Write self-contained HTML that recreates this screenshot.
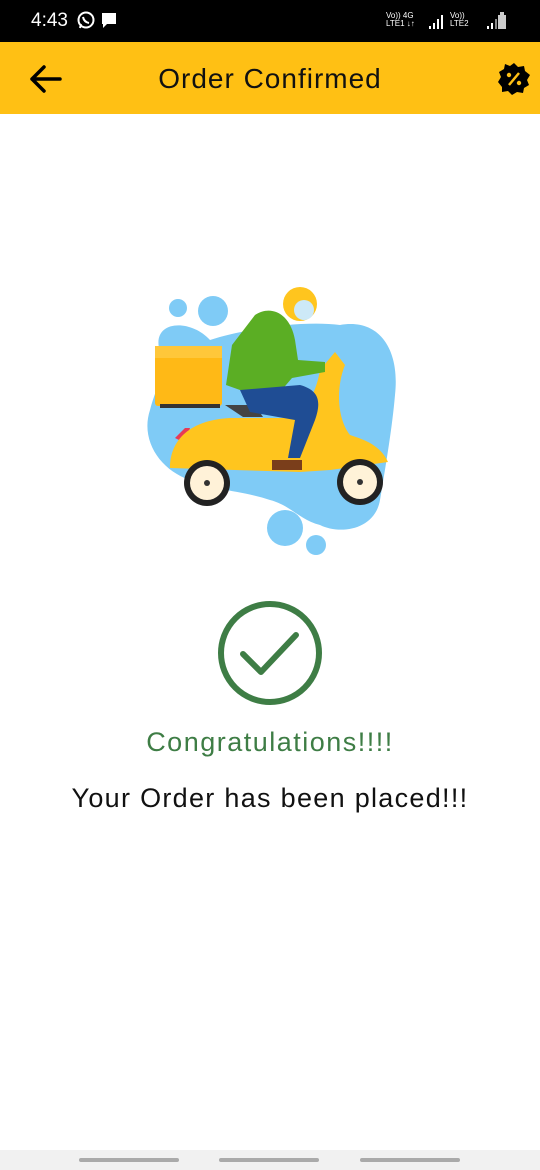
<!DOCTYPE html>
<html><head><meta charset="utf-8"><style>
html,body{margin:0;padding:0;width:540px;height:1170px;background:#fff;overflow:hidden;font-family:"Liberation Sans",sans-serif;position:relative}
.sb{position:absolute;left:0;top:0;width:540px;height:42px;background:#000;color:#fff}
.hd{position:absolute;left:0;top:42px;width:540px;height:72px;background:#FFC014}
.t{position:absolute;width:540px;text-align:center}
.nav{position:absolute;left:0;top:1150px;width:540px;height:20px;background:#f1f1f1}
.nav div{position:absolute;top:8px;height:4px;width:100px;background:#aaa;border-radius:2px}
</style></head><body>
<div class="sb">
<div style="position:absolute;left:31px;top:10px;font-size:19px">4:43</div>
<svg style="position:absolute;left:76px;top:10px" width="44" height="22"><circle cx="10" cy="10" r="7.5" fill="none" stroke="#fff" stroke-width="2"/><path d="M4 18 L5 14" stroke="#fff" stroke-width="2"/><path d="M7 7 q1 5 6 6" stroke="#fff" stroke-width="2" fill="none"/><path d="M26 3 h14 v11 h-9 l-4 4 v-4 h-1z" fill="#fff"/></svg>
<div style="position:absolute;left:386px;top:12px;font-size:8px;line-height:8px">Vo)) 4G<br>LTE1 ↓↑</div>
<svg style="position:absolute;left:428px;top:11px" width="90" height="20"><path d="M2 18v-3M6 18v-6M10 18v-10M14 18v-14" stroke="#fff" stroke-width="2"/><path d="M60 18v-3M64 18v-6M68 18v-10M72 18v-14" stroke="#888" stroke-width="2"/><path d="M60 18v-3M64 18v-6" stroke="#fff" stroke-width="2"/><rect x="70" y="4" width="8" height="14" fill="#ccc"/><rect x="72" y="1" width="4" height="3" fill="#ccc"/></svg>
<div style="position:absolute;left:450px;top:12px;font-size:8px;line-height:8px">Vo))<br>LTE2</div>
</div>
<div class="hd">
<svg style="position:absolute;left:28px;top:22px" width="36" height="30"><path d="M4 15 H32 M16 3 L4 15 L16 27" stroke="#000" stroke-width="3.5" fill="none" stroke-linecap="round" stroke-linejoin="round"/></svg>
<div class="t" style="top:21px;font-size:28px;color:#111;letter-spacing:1px">Order Confirmed</div>
<svg style="position:absolute;left:497px;top:20px" width="34" height="34"><g transform="translate(17,17)"><path d="M0-16 L4-12 10-13 11-8 16-4 13 1 15 6 10 9 9 14 3 13 -2 16 -6 12 -12 13 -12 8 -16 3 -13-2 -15-7 -10-10 -9-15 -4-13z" fill="#000"/><path d="M-5 6 L5-6" stroke="#FFC014" stroke-width="2.5"/><circle cx="-5" cy="-4" r="2.2" fill="#FFC014"/><circle cx="5" cy="4" r="2.2" fill="#FFC014"/></g></svg>
</div>
<svg style="position:absolute;left:0;top:0" width="540" height="1170">
<path d="M160 352 C150 320 190 318 210 340 C240 330 300 320 340 325 C380 318 400 350 395 395 C392 430 385 470 380 500 C375 530 340 535 320 525 C300 520 290 505 270 500 C240 490 210 490 190 480 C160 470 140 440 150 410 C155 390 165 375 160 352Z" fill="#7FCBF6"/>
<circle cx="178" cy="308" r="9" fill="#7FCBF6"/><circle cx="213" cy="311" r="15" fill="#7FCBF6"/>
<circle cx="285" cy="528" r="18" fill="#7FCBF6"/><circle cx="316" cy="545" r="10" fill="#7FCBF6"/>
<rect x="155" y="346" width="67" height="60" rx="3" fill="#FFB916"/><rect x="155" y="346" width="67" height="12" fill="#FFC73A"/>
<rect x="160" y="404" width="60" height="4" fill="#333"/>
<path d="M225 405 h30 l8 12 h-20z" fill="#444"/>
<path d="M175 438 l10-10 h5 l-5 15z" fill="#E83A55"/>
<path d="M170 468 C170 440 190 420 230 418 L280 418 C300 418 315 400 320 370 L335 352 L345 365 C335 390 338 420 350 435 C365 440 380 445 388 462 L330 470 L300 472 Z" fill="#FFC51E"/>
<path d="M232 345 L255 315 C270 305 290 312 295 340 L298 360 L325 362 L325 372 L292 378 L280 392 L240 390 L226 385Z" fill="#5BAE24"/>
<path d="M240 390 L300 385 C318 390 322 400 315 420 L300 458 L288 458 L295 420 L250 412Z" fill="#1F4D94"/>
<path d="M272 460 h30 v10 h-30z" fill="#7A3E1B"/>
<circle cx="300" cy="304" r="17" fill="#FFC51E"/><circle cx="304" cy="310" r="10" fill="#CDE9F7"/>
<circle cx="207" cy="483" r="23" fill="#222"/><circle cx="207" cy="483" r="17" fill="#FFF2D8"/><circle cx="207" cy="483" r="3" fill="#333"/>
<circle cx="360" cy="482" r="23" fill="#222"/><circle cx="360" cy="482" r="17" fill="#FFF2D8"/><circle cx="360" cy="482" r="3" fill="#333"/>
<circle cx="270" cy="653" r="49" fill="none" stroke="#3E7D45" stroke-width="6"/>
<path d="M243 654 L261 672 L296 635" fill="none" stroke="#3E7D45" stroke-width="6" stroke-linecap="round" stroke-linejoin="round"/>
</svg>
<div class="t" style="top:727px;font-size:27px;color:#3E7D45;letter-spacing:1.5px">Congratulations!!!!</div>
<div class="t" style="top:783px;font-size:27px;color:#111;letter-spacing:1.3px">Your Order has been placed!!!</div>
<div class="nav"><div style="left:79px"></div><div style="left:219px"></div><div style="left:360px"></div></div>
</body></html>
